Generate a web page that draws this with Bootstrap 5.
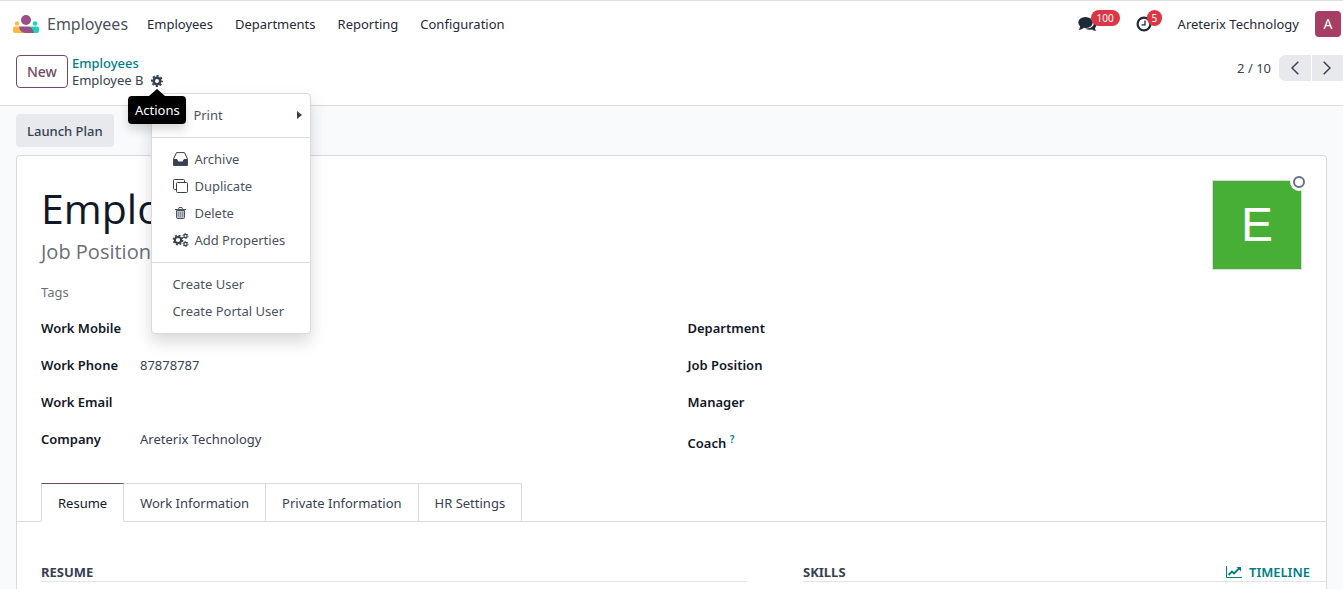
<!DOCTYPE html>
<html lang="en">
<head>
<meta charset="utf-8">
<meta name="viewport" content="width=device-width, initial-scale=1">
<title>Employee B - Employees</title>
<link href="https://cdn.jsdelivr.net/npm/bootstrap@5.3.0/dist/css/bootstrap.min.css" rel="stylesheet">
<style>
body{font-family:"Noto Sans","Open Sans",sans-serif;font-size:13px;line-height:20px;color:#374151;background:#f9fafb}
a{text-decoration:none}
svg{display:block;flex:none}
.top-bar{height:46px;border-top:1px solid #dee2e6;padding:0 2px 0 12px}
.brand-link{gap:7px}
.brand-name{font-size:16px;color:#4b5260}
.main-links{gap:22px;margin-left:19px}
.menu-link{color:#1f2937}
.pill{font-size:10px;line-height:16px;background:#dc3545;color:#fff;padding:0 6px;border-radius:8px;top:-5px}
.pill-msg{left:13px}
.pill-act{left:11px;padding:0 5px}
.sys-btn{color:#1f2937;height:18px;width:18px}
.avatar{width:26px;height:26px;border-radius:4px;background:#a63f63;color:#fff;font-size:14px}
.control-panel{border-bottom:1px solid #d8dadd;height:60px;padding:9px 0 0 16px}
.btn{font-size:13px;line-height:20px}
.btn-new{border:1px solid #714b67;color:#714b67;height:33px;padding:0 10px;font-size:14px;font-weight:500;border-radius:4px}
.crumbs{line-height:17px}
.teal{color:#017e84;font-weight:500}
.gear{width:12px;height:12px;color:#374151}
.pager-btn{width:32px;height:26px;background:#e7e9ed;color:#374151}
.pager-next{box-shadow:inset 1px 0 #fff}
.actions-menu{display:block;top:18px;left:0;width:160px;padding:8px 0;border:1px solid #d8dadd;border-radius:4px;font-size:13px;box-shadow:0 8px 16px rgba(0,0,0,.15)}
.actions-menu .dropdown-item{color:#4b5361;height:27px;padding:0 20px;gap:5px}
.actions-menu .dropdown-divider{margin:8px 0;border-color:#d8dadd;opacity:1}
.actions-menu .print-item{padding:0 8px 0 41px}
.tip{background:#000;color:#fff;border-radius:4px;height:28px;width:58px;left:-23px;top:21px;z-index:1100;line-height:28px;box-shadow:0 6px 10px rgba(0,0,0,.15)}
.tip::before{content:"";position:absolute;left:21px;top:-7px;border:8px solid transparent;border-top:0;border-bottom:7px solid #000}
.btn-plan{background:#e7e9ed;color:#374151;height:33px;padding:0 10px;font-weight:500;border-radius:4px}
.sheet{border:1px solid #d8dadd;border-bottom:0;border-radius:4px 4px 0 0;background:#fff}
.sheet-head{padding:24px 24px 0}
.emp-name{font-family:"Open Sans","Noto Sans",sans-serif;font-size:41px;line-height:56px;font-weight:400;color:#111827;margin:0}
.job-title{font-family:"Open Sans","Noto Sans",sans-serif;font-size:20px;line-height:32px;color:#6b6f78}
.tags{margin-top:14px;color:#6b6f78}
.photo{width:90px;height:90px;background:#48af36;border:1px solid #d8dadd;color:#fff;font-family:"Liberation Sans",sans-serif;font-size:48px}
.presence{width:18px;height:18px;border-radius:50%;background:#fff;right:-7px;top:-8px}
.presence::after{content:"";position:absolute;left:3px;top:3px;width:12px;height:12px;border:2px solid #6b6f85;border-radius:50%}
.fields{margin:16px 24px 0;column-gap:32px;display:grid;grid-template-columns:1fr 1fr}
.field-row{height:37px}
.field-name{width:99px;font-weight:600;color:#111827}
.help{color:#0180a5;font-size:10px}
.nav-tabs{padding:0 24px;margin-top:17px;border-color:#d8dadd}
.nav-tabs .nav-link{color:#374151;border:1px solid #d8dadd;border-left-width:0;border-radius:0;padding:0 16px;height:39px}
.nav-tabs .nav-link.active{color:#111827;border-color:#714b67 #d8dadd #fff;border-left-width:1px}
.panes{display:grid;grid-template-columns:706fr 523fr;column-gap:56px;padding:40px 0 0 24px}
.pane-title{font-size:13px;font-weight:700;line-height:20px;margin:0;color:#374151}
.pane-head{border-bottom:1px solid #e2e4e7;height:20px}
.timeline{font-weight:600;margin-right:16px;gap:7px;line-height:20px}
</style>
</head>
<body class="vh-100 overflow-hidden d-flex flex-column">
<header class="bg-white">
  <nav class="top-bar d-flex align-items-center">
    <a href="#" class="brand-link d-flex align-items-center">
      <svg width="28" height="20" viewBox="0 0 28 20"><circle cx="5" cy="9.500" r="2.200" fill="#fbb945"/><circle cx="23" cy="9.500" r="2.200" fill="#1ad3bb"/><circle cx="14" cy="6" r="5" fill="#985184"/><path d="M1 14.500q0-2 2-2h4l7 6.500H3q-2 0-2-2z" fill="#fbb945"/><path d="M27 14.500q0-2-2-2h-8l5 6.500h3q2 0 2-2z" fill="#1ad3bb"/><path d="M7 12.500h9.500q4.500 1 5.500 6.500h-9q-5.500-1-6-6.500z" fill="#985184"/></svg>
      <span class="brand-name">Employees</span>
    </a>
    <div class="main-links d-flex">
      <a href="#" class="menu-link">Employees</a><a href="#" class="menu-link">Departments</a><a href="#" class="menu-link">Reporting</a><a href="#" class="menu-link">Configuration</a>
    </div>
    <div class="d-flex align-items-center ms-auto">
      <button class="sys-btn btn p-0 border-0 position-relative me-4" aria-label="Messages"><svg width="19" height="16" viewBox="0 0 19 16" fill="currentColor"><ellipse cx="7.500" cy="6.500" rx="7.200" ry="5.500"/><path d="M2.500 9.500 1 14q3-.3 5-2.600zM16 5q3 2.400 2.200 5-.4 1.400-1.400 2.200.5 1.500 1.700 2.600-2.700.2-4.500-1.400-4.700.8-7-.9 6.500.2 8.500-3.500Q16.300 7 16 5z"/></svg><span class="pill pill-msg position-absolute">100</span></button>
      <button class="sys-btn btn p-0 border-0 position-relative ms-3 me-4" aria-label="Activities"><svg width="16" height="16" viewBox="0 0 16 16" fill="none" stroke="currentColor"><circle cx="8" cy="8" r="6.400" stroke-width="2.200"/><path d="M9 4.500v4.300H5.500" stroke-width="1.300"/></svg><span class="pill pill-act position-absolute">5</span></button>
      <span class="menu-link me-3">Areterix Technology</span>
      <span class="avatar d-flex align-items-center justify-content-center">A</span>
    </div>
  </nav>
  <div class="control-panel d-flex align-items-start">
    <button class="btn btn-new">New</button>
    <div class="crumbs ms-1">
      <a href="#" class="teal d-block">Employees</a>
      <div class="d-flex align-items-center gap-2">
        <span>Employee B</span>
        <div class="position-relative">
          <button class="gear btn p-0 border-0 d-block" aria-label="Actions"><svg width="12" height="12" viewBox="0 0 12 12" fill="none" stroke="currentColor"><circle cx="6" cy="6" r="3.300" stroke-width="2.600"/><circle cx="6" cy="6" r="5" stroke-width="2" stroke-dasharray="2.100 1.827" stroke-dashoffset="1.050"/></svg></button>
          <div class="tip position-absolute text-center" role="tooltip">Actions</div>
          <div class="dropdown-menu actions-menu show">
            <a href="#" class="dropdown-item print-item d-flex align-items-center justify-content-between">Print<svg width="5" height="8" viewBox="0 0 5 8"><path d="M0 0l5 4-5 4z" fill="#374151"/></svg></a>
            <hr class="dropdown-divider">
            <a href="#" class="dropdown-item d-flex align-items-center"><svg width="17" height="14" viewBox="0 0 17 14"><path d="M4.500.6h8L15.400 7v6.400H1.600V7z" fill="none" stroke="#374151"/><path d="M1.500 7H5l1.500 2.500h4L12 7h3.500v6.500h-14z" fill="#374151"/></svg>Archive</a>
            <a href="#" class="dropdown-item d-flex align-items-center"><svg width="17" height="14" viewBox="0 0 17 14" fill="none" stroke="#374151"><rect x="4.500" y="3.500" width="11" height="10" rx="1"/><path d="M4.500 10.500h-2q-1 0-1-1v-8q0-1 1-1h9q1 0 1 1v2"/></svg>Duplicate</a>
            <a href="#" class="dropdown-item d-flex align-items-center"><svg width="17" height="14" viewBox="0 0 17 14" fill="none" stroke="#4b5361"><path d="M4.500 4.500h8v7q0 1-1 1h-6q-1 0-1-1z" fill="#b8bcc2"/><path d="M3 3.500h11M6.500 3.500l.5-2h3l.5 2"/><path d="M6.500 6v5M8.500 6v5M10.500 6v5" stroke="#8b919b"/></svg>Delete</a>
            <a href="#" class="dropdown-item d-flex align-items-center"><svg width="17" height="14" viewBox="0 0 17 14" fill="none" stroke="#374151"><circle cx="6" cy="7" r="3.100" stroke-width="2"/><circle cx="6" cy="7" r="4.600" stroke-width="1.600" stroke-dasharray="1.900 1.713"/><circle cx="13.500" cy="3" r="1.600" stroke-width="1.200"/><circle cx="13.500" cy="3" r="2.500" stroke-dasharray="1.300 1.318"/><circle cx="13.500" cy="11" r="1.600" stroke-width="1.200"/><circle cx="13.500" cy="11" r="2.500" stroke-dasharray="1.300 1.318"/></svg>Add Properties</a>
            <hr class="dropdown-divider">
            <a href="#" class="dropdown-item d-flex align-items-center">Create User</a>
            <a href="#" class="dropdown-item d-flex align-items-center">Create Portal User</a>
          </div>
        </div>
      </div>
    </div>
    <div class="d-flex align-items-center ms-auto">
      <span class="me-2">2 / 10</span>
      <button class="btn pager-btn border-0 p-0 d-flex align-items-center justify-content-center rounded-0 rounded-start" aria-label="Previous"><svg width="8" height="14" viewBox="0 0 8 14" fill="none" stroke="currentColor" stroke-width="1.500"><path d="M7.300.7 1 7l6.300 6.300"/></svg></button>
      <button class="btn pager-btn pager-next border-0 p-0 d-flex align-items-center justify-content-center rounded-0" aria-label="Next"><svg width="8" height="14" viewBox="0 0 8 14" fill="none" stroke="currentColor" stroke-width="1.500"><path d="M.7.700 7 7 .7 13.300"/></svg></button>
    </div>
  </div>
</header>
<main class="flex-grow-1 d-flex flex-column px-3">
  <div class="py-2"><button class="btn btn-plan">Launch Plan</button></div>
  <section class="sheet flex-grow-1">
    <div class="sheet-head d-flex justify-content-between align-items-start">
      <div>
        <h1 class="emp-name">Employee B</h1>
        <div class="job-title">Job Position</div>
        <div class="tags">Tags</div>
      </div>
      <div class="photo position-relative d-flex align-items-center justify-content-center">E<span class="presence position-absolute"></span></div>
    </div>
    <div class="fields">
      <div>
        <div class="field-row d-flex"><span class="field-name">Work Mobile</span></div>
        <div class="field-row d-flex"><span class="field-name">Work Phone</span><span>87878787</span></div>
        <div class="field-row d-flex"><span class="field-name">Work Email</span></div>
        <div class="field-row d-flex"><span class="field-name">Company</span><span>Areterix Technology</span></div>
      </div>
      <div>
        <div class="field-row d-flex"><span class="field-name">Department</span></div>
        <div class="field-row d-flex"><span class="field-name">Job Position</span></div>
        <div class="field-row d-flex"><span class="field-name">Manager</span></div>
        <div class="field-row d-flex"><span class="field-name pt-1">Coach <sup class="help">?</sup></span></div>
      </div>
    </div>
    <ul class="nav nav-tabs" role="tablist">
      <li class="nav-item"><button class="nav-link active" role="tab" aria-selected="true">Resume</button></li>
      <li class="nav-item"><button class="nav-link" role="tab">Work Information</button></li>
      <li class="nav-item"><button class="nav-link" role="tab">Private Information</button></li>
      <li class="nav-item"><button class="nav-link" role="tab">HR Settings</button></li>
    </ul>
    <div class="panes">
      <div class="pane-head"><h2 class="pane-title">RESUME</h2></div>
      <div class="pane-head d-flex justify-content-between"><h2 class="pane-title">SKILLS</h2>
        <a href="#" class="teal timeline d-flex align-items-center"><svg width="16" height="12" viewBox="0 0 16 12" fill="none" stroke="currentColor"><path d="M.5 0v11.500H16"/><path d="M2.500 9 6 5.500l2 2L13 2.500" stroke-width="1.800"/><path d="M10.500 1H15v4.500z" fill="currentColor" stroke="none"/></svg>TIMELINE</a></div>
    </div>
  </section>
</main>
<script src="https://cdn.jsdelivr.net/npm/bootstrap@5.3.0/dist/js/bootstrap.bundle.min.js"></script>
</body>
</html>
